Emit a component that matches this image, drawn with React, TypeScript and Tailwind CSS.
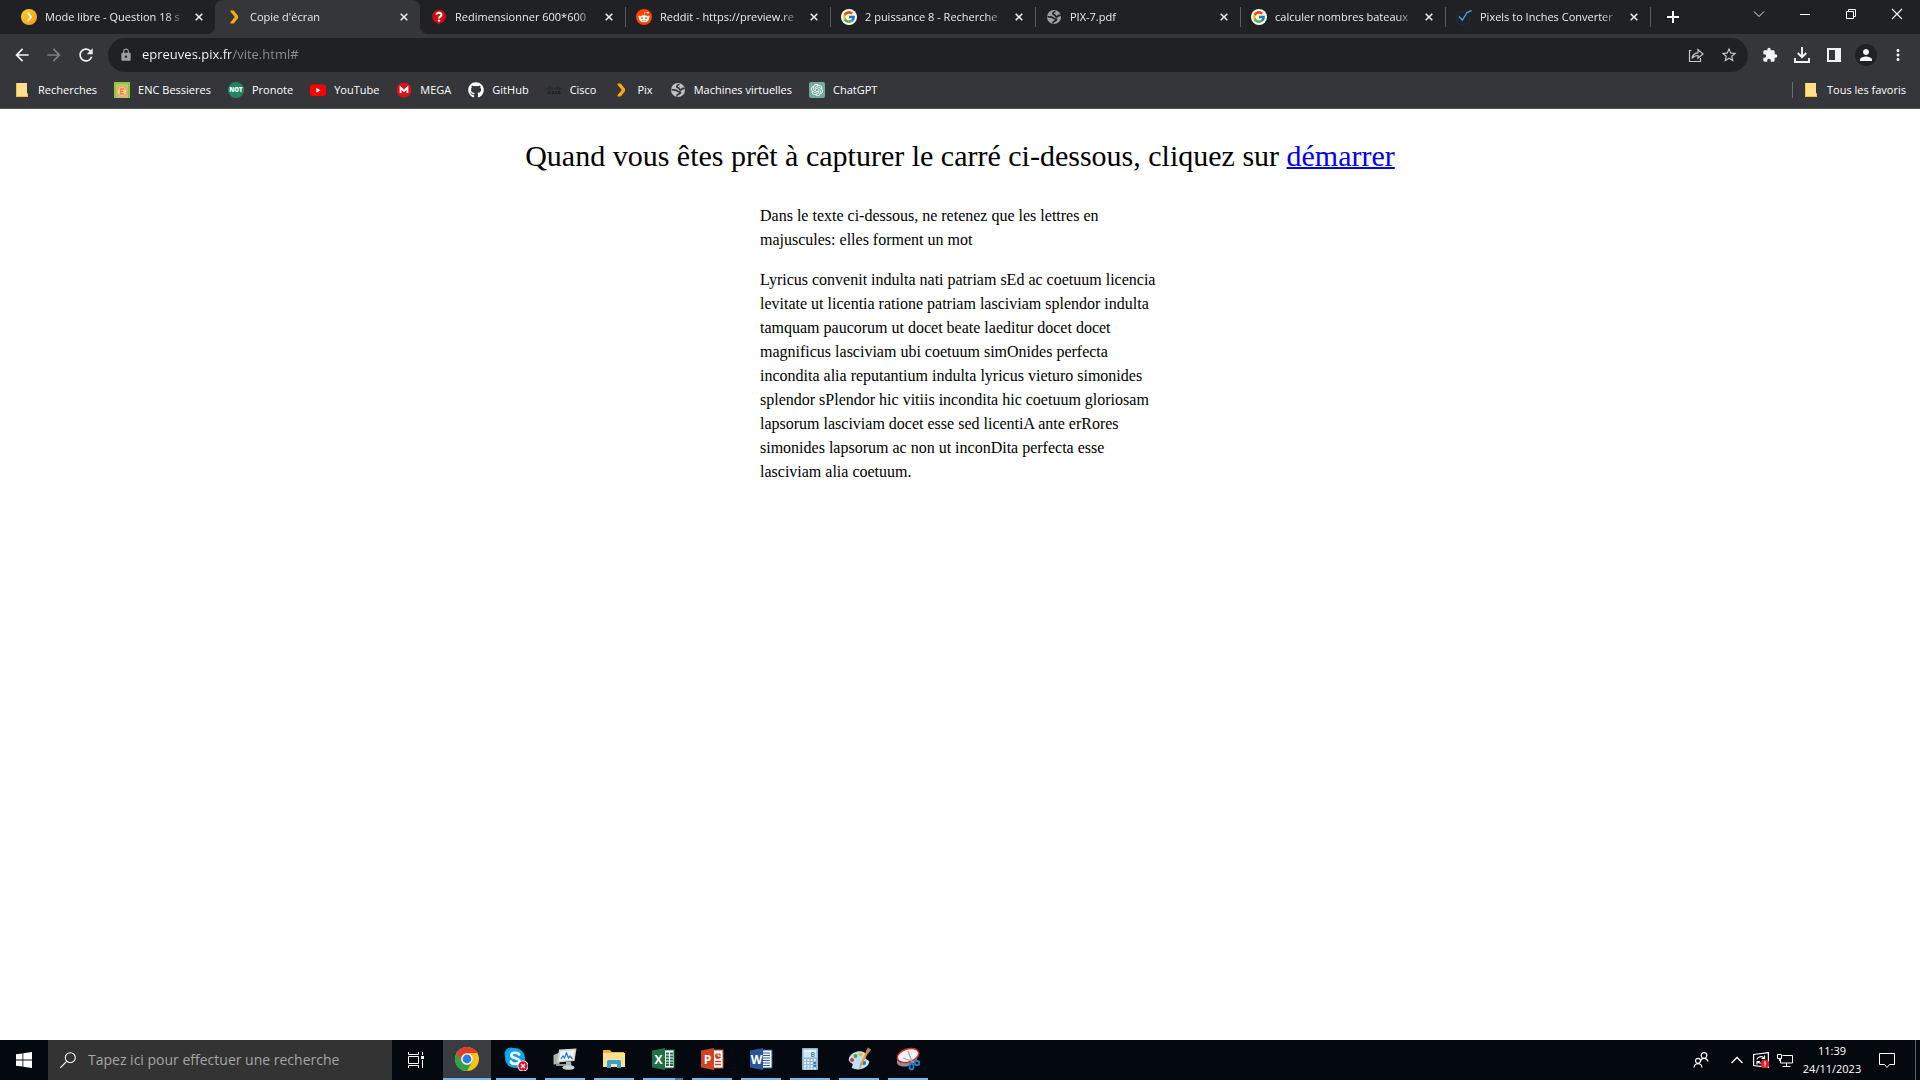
import React from "react";
import { FcGoogle } from "react-icons/fc";
import { FaGithub, FaRedditAlien } from "react-icons/fa";
import { SiCisco, SiOpenai } from "react-icons/si";
import {
  MdArrowBack,
  MdArrowForward,
  MdExtension,
  MdLock,
  MdMoreVert,
  MdPerson,
  MdRefresh,
  MdStarBorder,
} from "react-icons/md";

type IconProps = { children: React.ReactNode; className?: string; box?: number };

function Svg({ children, className = "size-4", box = 16 }: IconProps) {
  return (
    <svg viewBox={`0 0 ${box} ${box}`} className={className} fill="none" aria-hidden="true">
      {children}
    </svg>
  );
}

/* ---------- Favicons ---------- */

const PixRound = () => (
  <Svg>
    <defs>
      <linearGradient id="pix" x1="0" y1="0" x2="1" y2="1">
        <stop offset="0" stopColor="#ffd034" />
        <stop offset="1" stopColor="#fb9a10" />
      </linearGradient>
    </defs>
    <circle cx="8" cy="8" r="8" fill="url(#pix)" />
    <path d="M6.600 3.800 10 8l-3.400 4.200" stroke="#fff" strokeWidth="1.800" />
  </Svg>
);

const PixChevron = () => (
  <Svg>
    <path d="M4.500 1.500h3.200L12 6.800v2.400l-4.300 5.300H4.500v-1.300L8.800 8 4.500 2.800z" fill="#fba80c" />
  </Svg>
);

const QuestionPin = () => (
  <Svg>
    <path d="M8 .8a6.600 6.600 0 0 1 1.400 13.100L8 15.800l-1.400-1.900A6.600 6.600 0 0 1 8 .8z" fill="#d40c12" />
    <path d="M5.500 5.600C5.800 3.200 10.600 3.200 10.400 5.900 10.300 7.600 8 7.600 8 9.400" stroke="#fff" strokeWidth="2" />
    <circle cx="8" cy="11.600" r="1.200" fill="#fff" />
  </Svg>
);

const Reddit = () => (
  <span className="flex size-4 items-center justify-center rounded-full bg-[#ff4500]">
    <FaRedditAlien className="size-3 text-white" />
  </span>
);

const Google = () => (
  <span className="flex size-4 items-center justify-center rounded-full bg-white">
    <FcGoogle className="size-3.5" />
  </span>
);

const CheckRound = () => (
  <Svg>
    <circle cx="7" cy="9" r="6.500" stroke="#132c49" strokeWidth="1.300" />
    <path d="M3 7.500 6.500 11 11 3.500 15.500 1.500" stroke="#4f9bc9" strokeWidth="1.400" />
  </Svg>
);

const Globe = ({ color, sea }: { color: string; sea: string }) => (
  <Svg>
    <circle cx="8" cy="8" r="7" fill={color} />
    <path
      d="M9.500 2.500c-2 .3-3 1.500-2.500 2.500s2.500.5 2.500 2 2 1 2.500 0 2-.500 2.500 0M1.500 7.500c1.500.5 3.500 0 5 1s2 1.500 3.500 1.500-.5 2-2 2.500-1 1.500-1 2"
      stroke={sea}
      strokeWidth="1.700"
    />
  </Svg>
);

const Folder = () => (
  <Svg>
    <path d="M2 1h11v10.500h1V15H2z" fill="#ffe08a" />
    <path d="M2.500 1v13.500h11v-3" stroke="#e8bf4a" />
  </Svg>
);

const Enc = () => (
  <Svg>
    <path d="M0 0h16v16H0z" fill="#8cc63f" />
    <path d="M2 2h12v14H2z" fill="#c3c27a" />
    <circle cx="8" cy="9.500" r="5" stroke="#f4a55c" strokeWidth="1.500" fill="#efd3a0" />
    <path d="M10 7H6.500v5H10M6.500 9.500h3" stroke="#e8853a" strokeWidth="1.300" />
  </Svg>
);

const Pronote = () => (
  <span className="flex size-4 items-center justify-center rounded-full bg-[#23855f] text-[6px] font-extrabold text-white">
    NOT
  </span>
);

const YouTube = () => (
  <Svg>
    <rect y="2.500" width="16" height="11.500" rx="2.500" fill="#f00" />
    <path d="m6.300 5.800 4.200 2.450-4.200 2.450z" fill="#fff" />
  </Svg>
);

const Mega = () => (
  <Svg>
    <circle cx="8" cy="8" r="7.500" fill="#d9131c" />
    <path d="M4.600 11V5.600L8 9l3.400-3.400V11" stroke="#fff" strokeWidth="1.800" />
  </Svg>
);

const ChatGpt = () => (
  <span className="flex size-4 items-center justify-center rounded-xs bg-[#74aa9c]">
    <SiOpenai className="size-3 text-white" />
  </span>
);

/* ---------- Tabs ---------- */

const tabs = [
  { title: "Mode libre - Question 18 s", icon: <PixRound /> },
  { title: "Copie d'écran", icon: <PixChevron />, active: true },
  { title: "Redimensionner 600*600", icon: <QuestionPin /> },
  { title: "Reddit - https://preview.re", icon: <Reddit />, divider: true },
  { title: "2 puissance 8 - Recherche", icon: <Google />, divider: true },
  { title: "PIX-7.pdf", icon: <Globe color="#9aa0a6" sea="#202124" />, divider: true },
  { title: "calculer nombres bateaux", icon: <Google />, divider: true },
  { title: "Pixels to Inches Converter", icon: <CheckRound />, divider: true },
];

function TabStrip() {
  return (
    <header className="flex h-[34px] bg-[#202124] text-[#e8eaed]">
      <nav className="flex min-w-0 flex-1 pl-2.5" aria-label="Onglets">
        {tabs.map((tab) => (
          <div
            key={tab.title}
            className={
              tab.active
                ? "relative flex w-[205px] min-w-0 items-center rounded-t-lg bg-[#35363a] pr-2 pl-[11px]"
                : "relative flex w-[205px] min-w-0 items-center pr-2 pl-[11px]"
            }
          >
            {tab.divider && <span className="absolute top-[7px] left-0 h-5 w-px bg-[#5a5c60]" />}
            {tab.active && (
              <>
                <span className="absolute bottom-0 -left-2 size-2 bg-[radial-gradient(circle_at_0_0,#202124_8px,#35363a_8px)]" />
                <span className="absolute -right-2 bottom-0 size-2 bg-[radial-gradient(circle_at_100%_0,#202124_8px,#35363a_8px)]" />
              </>
            )}
            <a href="#" className="flex min-w-0 flex-1 items-center gap-2">
              <span className="shrink-0">{tab.icon}</span>
              <span className="min-w-0 flex-1 overflow-hidden [mask-image:linear-gradient(to_right,black_85%,transparent)] whitespace-nowrap">
                {tab.title}
              </span>
            </a>
            <button aria-label="Fermer l'onglet" className="ml-1 flex size-4 shrink-0 items-center justify-center">
              <Svg className="size-2" box={8}>
                <path d="m.7.700 6.600 6.600m0-6.600L.7 7.300" stroke="currentColor" strokeWidth="1.600" />
              </Svg>
            </button>
          </div>
        ))}
        <div className="relative flex items-center pl-[17px]">
          <span className="absolute top-[7px] left-0 h-5 w-px bg-[#5a5c60]" />
          <button aria-label="Nouvel onglet">
            <Svg className="size-3" box={12}>
              <path d="M6 0v12M0 6h12" stroke="#fff" strokeWidth="2" />
            </Svg>
          </button>
        </div>
      </nav>
      <div className="flex h-7 shrink-0">
        <button aria-label="Rechercher dans les onglets" className="flex w-[46px] items-center justify-center">
          <Svg className="size-3" box={12}>
            <path d="m1 3.500 5 5 5-5" stroke="#e8eaed" />
          </Svg>
        </button>
        <button aria-label="Réduire" className="flex w-[46px] items-center justify-center">
          <span className="h-px w-2.5 bg-white" />
        </button>
        <button aria-label="Restaurer" className="flex w-[46px] items-center justify-center">
          <Svg className="size-3" box={12}>
            <path d="M1.500 3.500h7v7h-7zM3.500 3V1.500h7v7H9" stroke="#fff" />
          </Svg>
        </button>
        <button aria-label="Fermer" className="flex w-[46px] items-center justify-center">
          <Svg className="size-3" box={12}>
            <path d="m1 1 10 10M11 1 1 11" stroke="#fff" strokeWidth="1.100" />
          </Svg>
        </button>
      </div>
    </header>
  );
}

/* ---------- Toolbar ---------- */

function Toolbar() {
  return (
    <div className="flex items-center bg-[#35363a] pt-1 pr-1.5 pl-3 text-[#f1f3f4]">
      <div className="flex items-center gap-3 pr-3">
        <button aria-label="Retour">
          <MdArrowBack className="size-5" />
        </button>
        <button aria-label="Avancer">
          <MdArrowForward className="size-5 text-[#7d7f83]" />
        </button>
        <button aria-label="Actualiser">
          <MdRefresh className="size-5" />
        </button>
      </div>
      <div className="flex h-[34px] flex-1 items-center rounded-full bg-[#202124] pr-2.5 pl-2.5">
        <MdLock className="size-4 p-px text-[#9aa0a6]" />
        <input
          aria-label="Adresse"
          defaultValue="epreuves.pix.fr/vite.html#"
          className="ml-2 min-w-0 flex-1 bg-[linear-gradient(to_right,#ffffff_89px,#8c9096_89px)] bg-clip-text text-[13px] text-transparent outline-none"
        />
        <div className="flex gap-4 text-[#c4c7ca]">
          <button aria-label="Partager">
            <Svg>
              <path d="M3.500 3.500h-2v11h11V11" stroke="currentColor" strokeWidth="1.200" />
              <path d="M4 11.500c.5-4 2.500-5.500 6-5.700V2.500L15 7l-5 4.200V8.500c-3 0-4.500.8-6 3z" stroke="currentColor" strokeWidth="1.200" />
            </Svg>
          </button>
          <button aria-label="Ajouter aux favoris">
            <MdStarBorder className="size-[18px]" />
          </button>
        </div>
      </div>
      <div className="flex items-center pl-1.5">
        <button aria-label="Extensions" className="flex w-8 justify-center">
          <MdExtension className="size-4" />
        </button>
        <button aria-label="Téléchargements" className="flex w-8 justify-center">
          <Svg>
            <path d="M8 0v9.500M3.800 6 8 10.200 12.200 6M1 11v4h14v-4" stroke="currentColor" strokeWidth="1.900" />
          </Svg>
        </button>
        <button aria-label="Panneau latéral" className="flex w-8 justify-center">
          <Svg className="size-3.5" box={14}>
            <path d="M0 0h14v14H0zM2 2v10h6V2z" fill="currentColor" fillRule="evenodd" />
          </Svg>
        </button>
        <button aria-label="Profil" className="flex w-8 justify-center">
          <span className="flex size-[22px] items-center justify-center rounded-full bg-[#202124]">
            <MdPerson className="size-[18px]" />
          </span>
        </button>
        <button aria-label="Menu" className="flex w-8 justify-center">
          <MdMoreVert className="size-[18px]" />
        </button>
      </div>
    </div>
  );
}

/* ---------- Bookmarks ---------- */

const bookmarks = [
  { label: "Recherches", icon: <Folder /> },
  { label: "ENC Bessieres", icon: <Enc /> },
  { label: "Pronote", icon: <Pronote /> },
  { label: "YouTube", icon: <YouTube /> },
  { label: "MEGA", icon: <Mega /> },
  { label: "GitHub", icon: <FaGithub className="size-4" /> },
  { label: "Cisco", icon: <SiCisco className="size-4 text-[#17181a]" /> },
  { label: "Pix", icon: <PixChevron /> },
  { label: "Machines virtuelles", icon: <Globe color="#bdc1c6" sea="#35363a" /> },
  { label: "ChatGPT", icon: <ChatGpt /> },
];

function BookmarksBar() {
  return (
    <nav
      aria-label="Favoris"
      className="flex h-[37px] items-center gap-[17px] border-b border-[#5c5358] bg-[#35363a] px-3.5 text-white"
    >
      {bookmarks.map((b) => (
        <a key={b.label} href="#" className="flex shrink-0 items-center gap-2">
          {b.icon}
          <span>{b.label}</span>
        </a>
      ))}
      <a href="#" className="ml-auto flex h-4 shrink-0 items-center gap-2 border-l border-[#6b6d71] pl-2.5">
        <Folder />
        <span>Tous les favoris</span>
      </a>
    </nav>
  );
}

/* ---------- Page ---------- */

function Page() {
  return (
    <main className="flex-1 bg-white font-['Liberation_Serif',serif] text-black">
      <h1 className="pt-[29px] text-center text-[30px] leading-9">
        Quand vous êtes prêt à capturer le carré ci-dessous, cliquez sur{" "}
        <a href="#" className="text-[#0000ee] underline decoration-2">
          démarrer
        </a>
      </h1>
      <section className="mx-auto mt-[30px] max-w-[400px] space-y-4 text-base leading-6">
        <p>Dans le texte ci-dessous, ne retenez que les lettres en majuscules: elles forment un mot</p>
        <p>
          Lyricus convenit indulta nati patriam sEd ac coetuum licencia levitate ut licentia ratione patriam lasciviam
          splendor indulta tamquam paucorum ut docet beate laeditur docet docet magnificus lasciviam ubi coetuum
          simOnides perfecta incondita alia reputantium indulta lyricus vieturo simonides splendor sPlendor hic vitiis
          incondita hic coetuum gloriosam lapsorum lasciviam docet esse sed licentiA ante erRores simonides lapsorum ac
          non ut inconDita perfecta esse lasciviam alia coetuum.
        </p>
      </section>
    </main>
  );
}

/* ---------- Taskbar ---------- */

const Chrome = () => (
  <Svg className="size-6" box={24}>
    <circle cx="12" cy="12" r="12" fill="#fbc116" />
    <path d="M1.600 6A12 12 0 0 1 22.400 6H12a6 6 0 0 0-5.200 9z" fill="#e33b2e" />
    <path d="M1.600 6A12 12 0 0 0 12 24l5.200-9a6 6 0 0 1-10.400 0z" fill="#2ba24c" />
    <circle cx="12" cy="12" r="5.600" fill="#fff" />
    <circle cx="12" cy="12" r="4.400" fill="#2b7de9" />
  </Svg>
);

const Skype = () => (
  <Svg className="size-6" box={24}>
    <circle cx="7" cy="7" r="6.500" fill="#0d9fe4" />
    <circle cx="11" cy="11" r="10" fill="#12a8ee" />
    <circle cx="15" cy="15" r="6.500" fill="#0d9fe4" />
    <path
      d="M15.200 7.600C14.500 5.300 7.300 4.800 7.300 8.300c0 3.700 8.200 2 8.200 5.800 0 3.700-7.800 3.500-8.700.5"
      stroke="#fff"
      strokeWidth="2.600"
      strokeLinecap="round"
    />
    <circle cx="19" cy="19" r="5.500" fill="#fff" />
    <circle cx="19" cy="19" r="4.700" fill="#d8122a" />
    <path d="m17 17 4 4m0-4-4 4" stroke="#fff" strokeWidth="1.300" />
  </Svg>
);

const Monitor = () => (
  <Svg className="size-6" box={24}>
    <path d="m.5 8 6-2.500V17l-6 .5z" fill="#aeb3af" />
    <path d="M3 17h10v2H3z" fill="#8d9390" />
    <path d="m6 2.500 17.500-1-2 12.500L4 15.500z" fill="#cfd3cf" />
    <path d="m7.500 4 14.200-.8-1.500 9.600-14.300 1z" fill="#e9f4fb" />
    <path d="m8 12 2-3 1.500 2 2-5 2 5 1.500-2 2.500 3" stroke="#2176b8" strokeWidth="1.200" />
    <path d="m13 15 5-.4.500 5.400H13z" fill="#b0b5b2" />
    <ellipse cx="15.500" cy="20.500" rx="6" ry="2.300" fill="#d0d4d1" />
  </Svg>
);

const Explorer = () => (
  <Svg className="size-6" box={24}>
    <path d="M1 3h7l1.500 2H22v3H1z" fill="#e9b53a" />
    <path d="M1 6h22v14H1z" fill="#ffe18f" />
    <path d="M5 21v-6.500q0-1.500 1.500-1.500h11q1.500 0 1.500 1.500V21h-4v-4H9v4z" fill="#3aa0dc" />
  </Svg>
);

type OfficeProps = { letter: string; dark: string; children: React.ReactNode };
const Office = ({ letter, dark, children }: OfficeProps) => (
  <Svg className="size-6" box={24}>
    <rect x="11" y="3" width="12" height="18" fill="#fff" stroke={dark} />
    {children}
    <path d="M1 3.500 14 1v22L1 20.500z" fill={dark} />
    <text x="7.500" y="16.500" textAnchor="middle" fontSize="12" fontWeight="700" fontFamily="Open Sans, sans-serif" fill="#fff">
      {letter}
    </text>
  </Svg>
);

const Excel = () => (
  <Office letter="X" dark="#1f7246">
    <path d="M15 6.500h7M15 9.500h7M15 12.500h7M15 15.500h7M15 18h7" stroke="#1f7246" strokeWidth="1.800" strokeDasharray="3 1" />
  </Office>
);
const PowerPoint = () => (
  <Office letter="P" dark="#d04424">
    <circle cx="18" cy="9" r="3" fill="#d04424" />
    <path d="M18 9V5.500M18 9h4" stroke="#fff" />
    <path d="M15 14.500h6M15 17.500h6" stroke="#d04424" strokeWidth="1.500" />
  </Office>
);
const Word = () => (
  <Office letter="W" dark="#2b5599">
    <path d="M14 6h7M14 8.500h7M14 11h7M14 13.500h7M14 16h7M14 18.500h7" stroke="#2b5599" strokeWidth="1.200" />
  </Office>
);

const Calculator = () => (
  <Svg className="size-6" box={24}>
    <rect x="4" y="1" width="16" height="22" rx="1" fill="#8fb9d6" />
    <rect x="5.500" y="2.500" width="13" height="8" fill="#cfe6f5" />
    <path d="M6 4h12" stroke="#f5fbff" />
    <path d="M13.500 5.500h2.500v4h-2.500zM13.500 7.500H16" stroke="#5d87a6" />
    <path d="M6 13h12M6 16h12M6 19h12M6 21.500h12" stroke="#e3f1fa" strokeWidth="1.800" strokeDasharray="2 1.300" />
    <path d="M15.500 16H18M15.500 19H18" stroke="#3581bb" strokeWidth="1.800" />
  </Svg>
);

const Paint = () => (
  <Svg className="size-6" box={24}>
    <path d="M2 11C4 5 14 2 18 6c2 2-1 4 1 6s4 1 3 4c-2 6-12 8-17 5-1-1 2-3 0-4.500S1 14 2 11z" fill="#bfe0f2" />
    <circle cx="5" cy="13" r="2" fill="#d33a31" />
    <circle cx="8.500" cy="9" r="2" fill="#47a83b" />
    <circle cx="13.500" cy="7.500" r="2" fill="#f0b92f" />
    <circle cx="17" cy="16" r="2" fill="#2e74b8" />
    <path d="m22 4-7 14-3 5 1-6 7-14z" fill="#e8993a" />
    <path d="m18.500 4.500 2.500-4 3 2-2.500 4z" fill="#b98450" />
  </Svg>
);

const Snipping = () => (
  <Svg className="size-6" box={24}>
    <ellipse cx="11" cy="13" rx="10.500" ry="6" transform="rotate(-18 11 13)" fill="#8d8f90" />
    <ellipse cx="12" cy="8.500" rx="11" ry="6.500" transform="rotate(-18 12 8.500)" fill="#f4f4f4" stroke="#d52b33" strokeWidth="1.500" />
    <path d="m12 4 4 11M7 11l11 4" stroke="#a3a8ab" strokeWidth="1.300" />
    <ellipse cx="15.500" cy="19.500" rx="2" ry="3" stroke="#1e7fc9" strokeWidth="1.800" />
    <ellipse cx="21" cy="16" rx="2.500" ry="2" stroke="#1e7fc9" strokeWidth="1.800" />
  </Svg>
);

const apps = [
  { name: "Skype", icon: <Skype /> },
  { name: "Moniteur", icon: <Monitor /> },
  { name: "Explorateur de fichiers", icon: <Explorer /> },
  { name: "Excel", icon: <Excel />, stacked: true },
  { name: "PowerPoint", icon: <PowerPoint /> },
  { name: "Word", icon: <Word /> },
  { name: "Calculatrice", icon: <Calculator /> },
  { name: "Paint", icon: <Paint /> },
  { name: "Outil Capture", icon: <Snipping /> },
];

function Taskbar() {
  return (
    <footer className="flex h-10 bg-[#04090f] text-white">
      <button aria-label="Démarrer" className="flex w-12 shrink-0 items-center justify-center">
        <Svg>
          <path d="M0 2.300 6.500 1.400v6.200H0zM7.300 1.300 16 0v7.600H7.300zM0 8.400h6.500v6.200L0 13.700zM7.300 8.400H16V16l-8.700-1.300z" fill="#fff" />
        </Svg>
      </button>
      <label className="flex w-[344px] items-center gap-3 bg-[#333333] pl-3">
        <Svg className="size-4 shrink-0">
          <circle cx="10.300" cy="5.700" r="5" stroke="#fff" strokeWidth="1.100" />
          <path d="M6.700 9.300.3 15.700" stroke="#fff" strokeWidth="1.200" />
        </Svg>
        <input
          aria-label="Rechercher"
          placeholder="Tapez ici pour effectuer une recherche"
          className="min-w-0 flex-1 bg-transparent text-sm outline-none placeholder:text-[#a6a6a6]"
        />
      </label>
      <button aria-label="Affichage des tâches" className="flex w-[51px] shrink-0 items-center pl-4">
        <Svg>
          <path d="M.5 0v2.500h10V0M.5 16v-2.500h10V16M.5 4.500h10v7H.5zM14.500 0v3M14.500 8v8" stroke="#fff" />
          <path d="M13 4h3v3h-3z" fill="#fff" />
        </Svg>
      </button>
      <div className="flex gap-px">
        <button
          aria-label="Google Chrome"
          className="flex w-12 items-center justify-center border-b-2 border-[#76b9ed] bg-[#393c40]"
        >
          <Chrome />
        </button>
        {apps.map((app) => (
          <button key={app.name} aria-label={app.name} className="flex w-12 flex-col items-center">
            <span className="flex flex-1 items-center">{app.icon}</span>
            <span className="flex h-0.5 w-10 bg-[#76b9ed]">
              {app.stacked && <span className="ml-auto w-2 bg-[#48769b]" />}
            </span>
          </button>
        ))}
      </div>
      <div className="ml-auto flex items-center">
        <button aria-label="Contacts" className="mr-4">
          <Svg>
            <circle cx="11" cy="3.500" r="2.800" stroke="#fff" strokeWidth="1.200" />
            <path d="M7.500 9c1-3.500 6.500-3.500 7.500.5" stroke="#fff" strokeWidth="1.200" />
            <circle cx="5" cy="8.800" r="2.500" stroke="#fff" strokeWidth="1.200" />
            <path d="M1 15.500c.5-5 7.500-5 8 0" stroke="#fff" strokeWidth="1.200" />
          </Svg>
        </button>
        <button aria-label="Icônes cachées" className="flex w-6 justify-center">
          <Svg className="size-3" box={12}>
            <path d="m.5 9 5.500-5.500L11.500 9" stroke="#fff" strokeWidth="1.300" />
          </Svg>
        </button>
        <button aria-label="Mise à jour" className="flex w-6 justify-center">
          <Svg>
            <path d="M.6 2.500 15.400.6v14.800L.6 13.500z" stroke="#fff" strokeWidth="1.200" />
            <path d="M4 7.500c.5-3 5-4 7-1.200M11.500 3.500v3h-3M11 9c-1 2.500-5 3-6.500.5M4 12.500V9.500h3" stroke="#fff" strokeWidth="1.200" />
            <circle cx="12" cy="12" r="4.500" fill="#e0202b" />
            <path d="M12 9.300v3.400M12 13.400v1.200" stroke="#fff" strokeWidth="1.300" />
          </Svg>
        </button>
        <button aria-label="Réseau" className="flex w-6 justify-center">
          <Svg>
            <path d="M5.500 3.500h10v7.500H3.500V7M9.500 11v3.500M5.500 14.500h8M.5 2.500h4v4h-4zM2.500 6.500V9" stroke="#fff" />
          </Svg>
        </button>
        <time dateTime="2023-11-24T11:39" className="flex w-[70px] flex-col items-center text-[11px] leading-[18px]">
          <span>11:39</span>
          <span>24/11/2023</span>
        </time>
        <button aria-label="Notifications" className="flex w-10 justify-center">
          <Svg>
            <path d="M.5 1.500h15v11h-5l-2.500 3-2.500-3h-5z" stroke="#fff" />
          </Svg>
        </button>
        <span className="ml-2 h-10 w-[5px] border-l border-[#5b5f66]" />
      </div>
    </footer>
  );
}

export default function App() {
  return (
    <div className="flex min-h-screen flex-col font-['Open_Sans',sans-serif] text-[11px]">
      <TabStrip />
      <Toolbar />
      <BookmarksBar />
      <Page />
      <Taskbar />
    </div>
  );
}
